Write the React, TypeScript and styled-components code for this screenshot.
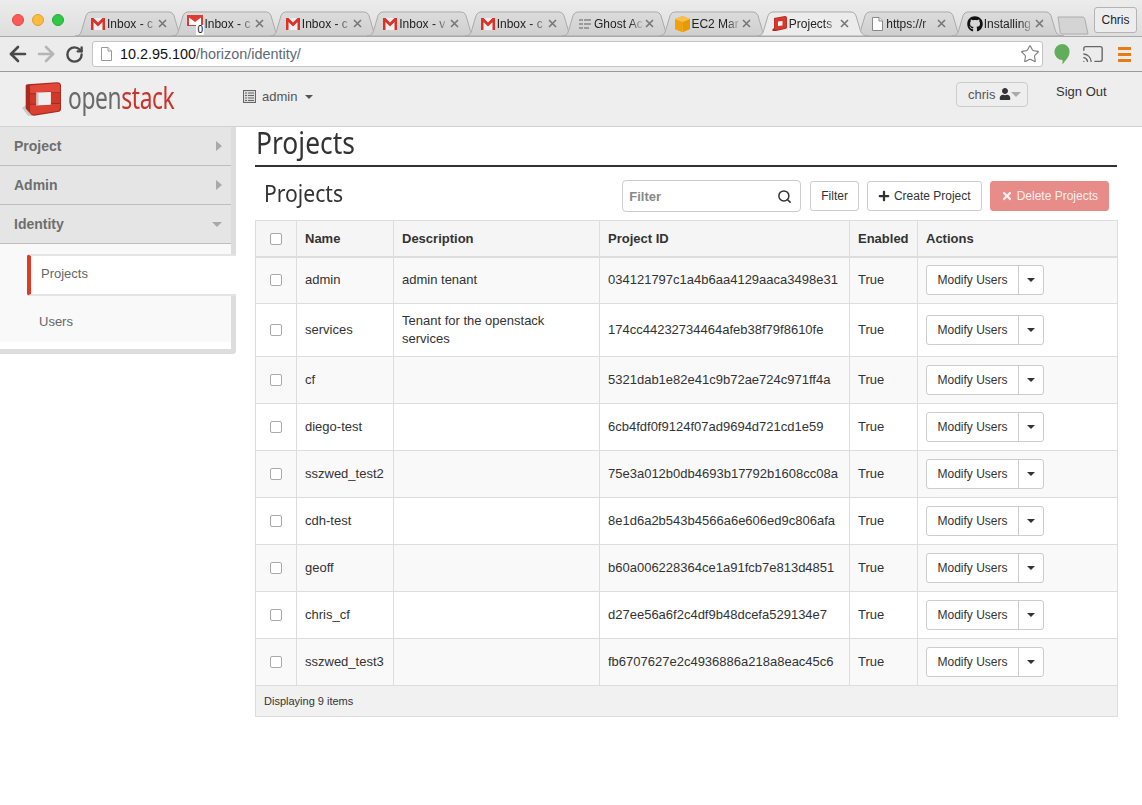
import React from 'react';
import styled, { createGlobalStyle } from 'styled-components';
import { ArrowLeft, ArrowRight, Cast, RotateCw, Search, Star } from 'lucide-react';
import { FaGithub, FaPlus, FaTimes, FaUser } from 'react-icons/fa';

const GlobalStyle = createGlobalStyle`
  html, body {
    margin: 0;
    padding: 0;
    background: #fff;
    font-family: "Liberation Sans", Arial, sans-serif;
    color: #333;
    font-size: 13px;
  }
  * {
    box-sizing: border-box;
  }
`;

const headingFont = `"Noto Sans", "Open Sans", sans-serif`;

const Page = styled.div`
  width: 1142px;
  height: 805px;
  overflow: hidden;
`;

/* browser chrome */
const TabStrip = styled.div`
  height: 36px;
  display: flex;
  align-items: flex-end;
  padding-left: 12px;
  background: linear-gradient(#ececec, #dedede);
  position: relative;
`;
const Lights = styled.div`
  display: flex;
  gap: 8px;
  margin-bottom: 10px;
  margin-right: 0;
  width: 63px;
  flex: none;
`;
const Light = styled.span<{ $color: string; $edge: string }>`
  width: 12px;
  height: 12px;
  border-radius: 50%;
  background: ${(p) => p.$color};
  border: 1px solid ${(p) => p.$edge};
`;
const TabRow = styled.div`
  display: flex;
  height: 25px;
  align-items: stretch;
`;
const TabItem = styled.div<{ $active?: boolean }>`
  position: relative;
  width: 112px;
  flex: none;
  margin-right: -14.6px;
  padding: 0 0 0 15px;
  display: flex;
  align-items: center;
  z-index: ${(p) => (p.$active ? 5 : 1)};
  font-size: 12px;
  color: #222;
`;
const TabShape = styled.svg`
  position: absolute;
  inset: 0;
  width: 100%;
  height: 100%;
`;
const TabIcon = styled.span`
  position: relative;
  width: 16px;
  height: 16px;
  flex: none;
  display: flex;
  align-items: center;
  justify-content: center;
`;
const TabLabel = styled.span`
  position: relative;
  width: 50px;
  margin-left: 1px;
  overflow: hidden;
  white-space: nowrap;
  -webkit-mask-image: linear-gradient(90deg, #000 72%, transparent 100%);
  mask-image: linear-gradient(90deg, #000 72%, transparent 100%);
`;
const TabClose = styled.span`
  position: relative;
  margin-left: 1px;
  color: #777;
  display: flex;
`;
const NewTab = styled.svg`
  position: absolute;
  left: 1057px;
  top: 16px;
`;
const ProfileButton = styled.div`
  position: absolute;
  left: 1094px;
  top: 7px;
  width: 43px;
  height: 26px;
  border: 1px solid #b4b4b4;
  border-radius: 3px;
  background: #ededed;
  font-size: 12px;
  color: #222;
  display: flex;
  align-items: center;
  justify-content: center;
`;
const Toolbar = styled.div`
  height: 36px;
  display: flex;
  align-items: center;
  background: #ececec;
  border-top: 1px solid #a9a9a9;
  border-bottom: 1px solid #9a9a9a;
  padding-left: 4px;
`;
const NavButton = styled.span<{ $dim?: boolean }>`
  display: flex;
  align-items: center;
  justify-content: center;
  width: 28px;
  color: ${(p) => (p.$dim ? '#b5b5b5' : '#4a4a4a')};
`;
const AddressBar = styled.div`
  width: 951px;
  height: 26px;
  margin-left: 4px;
  display: flex;
  align-items: center;
  background: #fff;
  border: 1px solid #c4c4c4;
  border-radius: 3px;
  padding: 0 2px 0 8px;
`;
const Url = styled.div`
  flex: 1;
  margin-left: 8px;
  font-size: 14.4px;
  color: #5e6a74;
`;
const UrlHost = styled.span`
  color: #111;
`;
const ToolIcons = styled.div`
  display: flex;
  align-items: center;
  margin-left: 11px;
  gap: 12px;
`;
const MenuBars = styled.div`
  display: flex;
  flex-direction: column;
  gap: 3px;
  margin-left: 2px;
  & > span {
    display: block;
    width: 13px;
    height: 3px;
    background: #e77c12;
  }
`;

/* horizon header */
const Header = styled.header`
  height: 55px;
  display: flex;
  align-items: center;
  background: #eee;
  border-bottom: 1px solid #d2d2d2;
  padding-left: 22px;
  position: relative;
`;
const Brand = styled.div`
  display: flex;
  align-items: center;
  width: 221px;
  flex: none;
`;
const BrandText = styled.span`
  font-family: ${headingFont};
  font-size: 30px;
  line-height: 30px;
  margin: -2px 0 0 7px;
  display: inline-block;
  transform: scaleX(0.76);
  transform-origin: left center;
  letter-spacing: -0.5px;
  color: #6a6a6a;
  & b {
    font-weight: 400;
    color: #c8332a;
  }
`;
const ProjectPicker = styled.div`
  display: flex;
  align-items: center;
  width: 713px;
  flex: none;
  color: #555;
  font-size: 13px;
  margin-top: -5px;
`;
const Caret = styled.span<{ $color?: string; $size?: number }>`
  display: inline-block;
  width: 0;
  height: 0;
  border-left: ${(p) => p.$size ?? 4}px solid transparent;
  border-right: ${(p) => p.$size ?? 4}px solid transparent;
  border-top: ${(p) => p.$size ?? 4}px solid ${(p) => p.$color ?? '#555'};
`;
const UserButton = styled.div`
  width: 72px;
  height: 25px;
  flex: none;
  display: flex;
  align-items: center;
  padding-left: 11px;
  margin-top: -10px;
  background: #eee;
  border: 1px solid #ccc;
  border-radius: 4px;
  color: #555;
  font-size: 13px;
`;
const SignOut = styled.div`
  margin: -15px 0 0 28px;
  color: #333;
  font-size: 13px;
`;

/* page body */
const Body = styled.div`
  display: flex;
  align-items: flex-start;
`;
const Sidebar = styled.nav`
  width: 236px;
  flex: none;
  border-right: 5px solid #ddd;
  border-bottom: 5px solid #ddd;
  border-bottom-right-radius: 4px;
  padding-bottom: 7px;
`;
const Accordion = styled.div`
  height: 39px;
  display: flex;
  align-items: center;
  justify-content: space-between;
  padding: 0 9px 0 14px;
  background: #e5e5e5;
  border-bottom: 1px solid #bdbdbd;
  color: #6e6e6e;
  font-size: 14px;
  font-weight: 700;
  &:last-of-type {
    border-bottom: none;
    height: 38px;
  }
`;
const ArrowRightTip = styled.span`
  width: 0;
  height: 0;
  border-top: 5px solid transparent;
  border-bottom: 5px solid transparent;
  border-left: 6px solid #a9a9a9;
`;
const SubList = styled.div`
  background: #f9f9f9;
  padding-top: 10px;
`;
const SubItem = styled.div<{ $active?: boolean }>`
  height: ${(p) => (p.$active ? 42 : 46)}px;
  display: flex;
  align-items: center;
  color: #666;
  font-size: 13px;
  ${(p) =>
    p.$active
      ? `
    position: relative;
    margin: 0 -5px 0 27px;
    padding: 0 0 4px 10px;
    background: #fff;
    border-top: 2px solid #e4e4e4;
    border-bottom: 2px solid #e4e4e4;
    border-left: 4px solid #dd3a28;
    border-radius: 3px 0 0 3px;
  `
      : `
    margin-left: 39px;
    padding-top: 5px;
  `}
`;

const Main = styled.main`
  width: 862px;
  margin-left: 19px;
`;
const PageTitle = styled.h1`
  margin: 0;
  height: 40px;
  border-bottom: 2px solid #333;
  font-family: ${headingFont};
  font-weight: 400;
  font-size: 30px;
  line-height: 32px;
  color: #333;
  padding-left: 1px;
`;
const Condensed = styled.span`
  display: inline-block;
  transform: scaleX(0.88);
  transform-origin: left center;
`;
const TableHead = styled.div`
  height: 53px;
  display: flex;
  align-items: center;
  padding: 5px 8px 0 9px;
`;
const TableTitle = styled.h2`
  margin: -8px 0 0;
  flex: 1;
  font-family: ${headingFont};
  font-weight: 400;
  font-size: 24px;
  color: #333;
`;
const FilterBox = styled.div`
  width: 179px;
  height: 32px;
  display: flex;
  align-items: center;
  justify-content: space-between;
  padding: 0 8px 0 6px;
  background: #fff;
  border: 1px solid #ccc;
  border-radius: 4px;
  color: #888;
  font-weight: 700;
  font-size: 13px;
`;
const Button = styled.button<{ $danger?: boolean; $left?: number }>`
  height: 30px;
  margin-left: ${(p) => p.$left ?? 8}px;
  padding: 0 10px;
  display: inline-flex;
  align-items: center;
  gap: 4px;
  font-family: inherit;
  font-size: 12px;
  border-radius: 3px;
  background: ${(p) => (p.$danger ? '#e78c89' : '#fff')};
  color: ${(p) => (p.$danger ? '#fdf0ef' : '#333')};
  border: 1px solid ${(p) => (p.$danger ? '#e78c89' : '#ccc')};
`;
const Table = styled.table`
  width: 862px;
  table-layout: fixed;
  border-collapse: collapse;
  font-size: 13px;
  border: 1px solid #ddd;
`;
const Th = styled.th`
  height: 36px;
  padding: 0 8px;
  text-align: left;
  font-weight: 700;
  color: #333;
  background: #f5f5f5;
  border: 1px solid #ddd;
  border-bottom: 2px solid #ddd;
`;
const Tr = styled.tr<{ $odd: boolean; $tall?: boolean }>`
  height: ${(p) => (p.$tall ? 53 : 47)}px;
  background: ${(p) => (p.$odd ? '#f9f9f9' : '#fff')};
`;
const Td = styled.td`
  padding: 0 8px;
  line-height: 18px;
  color: #333;
  border: 1px solid #ddd;
`;
const CheckCell = styled.td`
  text-align: center;
  padding: 0 0 2px;
  border: 1px solid #ddd;
`;
const CheckHead = styled(Th)`
  text-align: center;
  padding: 0;
`;
const Check = styled.span`
  display: inline-block;
  vertical-align: middle;
  width: 12px;
  height: 12px;
  background: #fff;
  border: 1px solid #aaa;
  border-radius: 2px;
`;
const ActionGroup = styled.div`
  display: inline-flex;
  height: 30px;
  vertical-align: middle;
  background: #fff;
  border: 1px solid #ccc;
  border-radius: 3px;
  font-size: 12px;
`;
const ActionMain = styled.span`
  width: 92px;
  display: flex;
  align-items: center;
  justify-content: center;
  border-right: 1px solid #ccc;
`;
const ActionCaret = styled.span`
  width: 24px;
  display: flex;
  align-items: center;
  justify-content: center;
`;
const FootCell = styled.td`
  height: 31px;
  padding: 0 8px;
  background: #f1f1f1;
  border: 1px solid #ddd;
  font-size: 11px;
  color: #333;
`;

/* little favicons */
const ZeroBadge = styled.span`
  position: absolute;
  left: 9px;
  top: 9px;
  padding: 0 1px;
  background: #fff;
  color: #000;
  font-size: 10px;
  line-height: 10px;
`;
const Gmail = () => (
  <svg width="14" height="12" viewBox="0 0 14 12">
    <rect x="0" y="0" width="14" height="12" fill="#f0eeee" />
    <path d="M0 0h2.500L7 4.600 11.500 0H14v12h-2.500V4L7 8.400 2.500 4v8H0z" fill="#d8322a" />
  </svg>
);
const GmailCount = () => (
  <>
    <svg width="16" height="12" viewBox="0 0 16 12" style={{ marginTop: -6 }}>
      <rect width="16" height="11" fill="#dd3b33" />
      <path d="M2 2.500 8 7l6-4.500V10H2z" fill="#fff" />
    </svg>
    <ZeroBadge>0</ZeroBadge>
  </>
);
const GhostIcon = () => (
  <svg width="12" height="12" viewBox="0 0 12 12" fill="#9a9a9a">
    <rect x="0" y="1" width="4" height="2" />
    <rect x="5" y="1" width="7" height="2" />
    <rect x="0" y="5" width="4" height="2" />
    <rect x="5" y="5" width="7" height="2" />
    <rect x="0" y="9" width="4" height="2" />
    <rect x="5" y="9" width="5" height="2" />
  </svg>
);
const Ec2Icon = () => (
  <svg width="15" height="16" viewBox="0 0 15 16">
    <path d="M7.500 0 15 3v10l-7.500 3L0 13V3z" fill="#f3ab1b" />
    <path d="M7 5.500 0 3v10l7 3z" fill="#f0a20a" />
    <path d="M7.500 6 8 16l7-3V3z" fill="#e79a08" />
    <path d="M7.500 0 15 3 7.500 6 0 3z" fill="#f7c04e" />
  </svg>
);
const StackIcon = () => (
  <svg width="15" height="15" viewBox="0 0 15 15">
    <path d="M0 14 2 12V2L13 0c1.500 0 2 1 2 2v9c0 1-.5 2-2 2L4 15H1z" fill="#a82a1f" />
    <path d="M2.500 2.500 13 .7c1 0 1.500.5 1.500 1.500v9c0 .7-.5 1.200-1.500 1.300L4 14c-1 0-1.500-.5-1.500-1.300z" fill="#d53a2a" />
    <path d="M6 5.500 10.500 5v4.500L6 10z" fill="#f2f2f2" />
  </svg>
);
const DocIcon = ({ color = '#888' }: { color?: string }) => (
  <svg width="11" height="14" viewBox="0 0 11 14">
    <path d="M.5.500h6.500l3.500 3.500v9.500H.5z" fill="#fff" stroke={color} />
    <path d="M7 .5V4h3.500" fill="#eee" stroke={color} />
  </svg>
);
const CloseMark = () => (
  <svg width="9" height="9" viewBox="0 0 9 9">
    <path d="M1 1l7 7M8 1 1 8" stroke="#777" strokeWidth="1.600" />
  </svg>
);
const LogoMark = () => (
  <svg width="39" height="34" viewBox="0 0 116 100">
    <path d="M0 76 12 68V10L26 92 30 100H18z" fill="#a9a9a9" opacity=".55" />
    <path d="M11 10Q11 7 16 6L104 0Q116 0 116 10V80Q116 88 106 89L36 100Q28 100 25 94L11 78Z" fill="#a62a1f" />
    <path d="M24 10 104 3Q113 3 113 11V30H86V28L43 30V33H24Z" fill="#e2483a" />
    <path d="M24 36H43V64H24ZM86 32H113V62H86Z" fill="#d0392a" />
    <path d="M24 67H43V69L86 68V65H113V79Q113 85 105 86L36 96Q27 96 24 90Z" fill="#d94031" />
    <path d="M43 31 86 29V67L43 69Z" fill="#efefef" />
    <path d="M43 31 49 31V68L43 69Z" fill="#c9c5c3" />
  </svg>
);
const ListGlyph = () => (
  <svg width="13" height="13" viewBox="0 0 13 13" style={{ marginRight: 6 }}>
    <rect x=".5" y=".5" width="12" height="12" fill="#ddd" stroke="#666" />
    <path d="M2 3h2M5 3h6M2 5.500h2M5 5.500h6M2 8h2M5 8h6M2 10.500h2M5 10.500h6" stroke="#666" />
  </svg>
);

type TabData = { label: string; icon: React.ReactNode; active?: boolean };

const tabs: TabData[] = [
  { label: 'Inbox - c', icon: <Gmail /> },
  { label: 'Inbox - c', icon: <GmailCount /> },
  { label: 'Inbox - c', icon: <Gmail /> },
  { label: 'Inbox - v', icon: <Gmail /> },
  { label: 'Inbox - c', icon: <Gmail /> },
  { label: 'Ghost Ac', icon: <GhostIcon /> },
  { label: 'EC2 Mar', icon: <Ec2Icon /> },
  { label: 'Projects', icon: <StackIcon />, active: true },
  { label: 'https://r', icon: <DocIcon /> },
  { label: 'Installing', icon: <FaGithub size={16} color="#111" /> },
];

const projects = [
  { name: 'admin', desc: 'admin tenant', id: '034121797c1a4b6aa4129aaca3498e31' },
  { name: 'services', desc: 'Tenant for the openstack services', id: '174cc44232734464afeb38f79f8610fe' },
  { name: 'cf', desc: '', id: '5321dab1e82e41c9b72ae724c971ff4a' },
  { name: 'diego-test', desc: '', id: '6cb4fdf0f9124f07ad9694d721cd1e59' },
  { name: 'sszwed_test2', desc: '', id: '75e3a012b0db4693b17792b1608cc08a' },
  { name: 'cdh-test', desc: '', id: '8e1d6a2b543b4566a6e606ed9c806afa' },
  { name: 'geoff', desc: '', id: 'b60a006228364ce1a91fcb7e813d4851' },
  { name: 'chris_cf', desc: '', id: 'd27ee56a6f2c4df9b48dcefa529134e7' },
  { name: 'sszwed_test3', desc: '', id: 'fb6707627e2c4936886a218a8eac45c6' },
];

const App: React.FC = () => {
  return (
    <Page>
      <GlobalStyle />
      <TabStrip>
        <Lights>
          <Light $color="#fc5b57" $edge="#e2463f" />
          <Light $color="#fdbc40" $edge="#e0a028" />
          <Light $color="#33c748" $edge="#27aa35" />
        </Lights>
        <TabRow>
          {tabs.map((tab, i) => (
            <TabItem key={i} $active={tab.active}>
              <TabShape viewBox="0 0 112 26" preserveAspectRatio="none">
                <path
                  d="M0 26C5 26 6 23 7 19L11 5C12 2 14 1 17 1H93C96 1 98 2 99 5L103 19C104 23 106 26 112 26Z"
                  fill={tab.active ? '#ececec' : 'url(#tabFill)'}
                  stroke="#a8a8a8"
                />
                <defs>
                  <linearGradient id="tabFill" x1="0" y1="0" x2="0" y2="1">
                    <stop offset="0" stopColor="#dcdcdc" />
                    <stop offset="1" stopColor="#cfcfcf" />
                  </linearGradient>
                </defs>
              </TabShape>
              <TabIcon>{tab.icon}</TabIcon>
              <TabLabel>{tab.label}</TabLabel>
              <TabClose>
                <CloseMark />
              </TabClose>
            </TabItem>
          ))}
        </TabRow>
        <NewTab width="32" height="19" viewBox="0 0 32 19">
          <path d="M1 1H25C27 1 28 2 28 4L31 18H5C3 18 3 17 3 15Z" fill="#d4d4d4" stroke="#acacac" />
        </NewTab>
        <ProfileButton>Chris</ProfileButton>
      </TabStrip>

      <Toolbar>
        <NavButton>
          <ArrowLeft size={24} strokeWidth={2.6} />
        </NavButton>
        <NavButton $dim>
          <ArrowRight size={24} strokeWidth={2.6} />
        </NavButton>
        <NavButton>
          <RotateCw size={19} strokeWidth={3} />
        </NavButton>
        <AddressBar>
          <DocIcon color="#999" />
          <Url>
            <UrlHost>10.2.95.100</UrlHost>/horizon/identity/
          </Url>
          <Star size={20} color="#777" strokeWidth={1.3} />
        </AddressBar>
        <ToolIcons>
          <svg width="16" height="21" viewBox="0 0 16 21">
            <path d="M8 0a7.500 7.500 0 0 1 7.500 8c0 5-4 8-7 12.500V16A7.800 8 0 0 1 8 0z" fill="#62ad5b" />
          </svg>
          <Cast size={22} color="#666" strokeWidth={1.5} />
          <MenuBars>
            <span />
            <span />
            <span />
          </MenuBars>
        </ToolIcons>
      </Toolbar>

      <Header>
        <Brand>
          <LogoMark />
          <BrandText>
            open<b>stack</b>
          </BrandText>
        </Brand>
        <ProjectPicker>
          <ListGlyph />
          admin&nbsp;&nbsp;
          <Caret />
        </ProjectPicker>
        <UserButton>
          chris&nbsp;
          <FaUser size={12} color="#333" />
          <Caret $color="#aaa" $size={5} />
        </UserButton>
        <SignOut>Sign Out</SignOut>
      </Header>

      <Body>
        <Sidebar>
          <Accordion>
            Project
            <ArrowRightTip />
          </Accordion>
          <Accordion>
            Admin
            <ArrowRightTip />
          </Accordion>
          <Accordion>
            Identity
            <Caret $color="#a9a9a9" $size={5} />
          </Accordion>
          <SubList>
            <SubItem $active>Projects</SubItem>
            <SubItem>Users</SubItem>
          </SubList>
        </Sidebar>

        <Main>
          <PageTitle>
            <Condensed>Projects</Condensed>
          </PageTitle>
          <TableHead>
            <TableTitle>
              <Condensed>Projects</Condensed>
            </TableTitle>
            <FilterBox>
              Filter
              <Search size={15} color="#333" strokeWidth={2.4} />
            </FilterBox>
            <Button $left={9}>Filter</Button>
            <Button>
              <FaPlus size={12} color="#333" />
              Create Project
            </Button>
            <Button $danger>
              <FaTimes size={12} />
              Delete Projects
            </Button>
          </TableHead>
          <Table>
            <colgroup>
              <col style={{ width: 41 }} />
              <col style={{ width: 97 }} />
              <col style={{ width: 206 }} />
              <col style={{ width: 250 }} />
              <col style={{ width: 68 }} />
              <col style={{ width: 200 }} />
            </colgroup>
            <thead>
              <tr>
                <CheckHead>
                  <Check />
                </CheckHead>
                <Th>Name</Th>
                <Th>Description</Th>
                <Th>Project ID</Th>
                <Th>Enabled</Th>
                <Th>Actions</Th>
              </tr>
            </thead>
            <tbody>
              {projects.map((project, i) => (
                <Tr key={project.id} $odd={i % 2 === 0} $tall={project.name === 'services'}>
                  <CheckCell>
                    <Check />
                  </CheckCell>
                  <Td>{project.name}</Td>
                  <Td>{project.desc}</Td>
                  <Td>{project.id}</Td>
                  <Td>True</Td>
                  <Td>
                    <ActionGroup>
                      <ActionMain>Modify Users</ActionMain>
                      <ActionCaret>
                        <Caret $color="#333" />
                      </ActionCaret>
                    </ActionGroup>
                  </Td>
                </Tr>
              ))}
            </tbody>
            <tfoot>
              <tr>
                <FootCell colSpan={6}>Displaying 9 items</FootCell>
              </tr>
            </tfoot>
          </Table>
        </Main>
      </Body>
    </Page>
  );
};

export default App;
